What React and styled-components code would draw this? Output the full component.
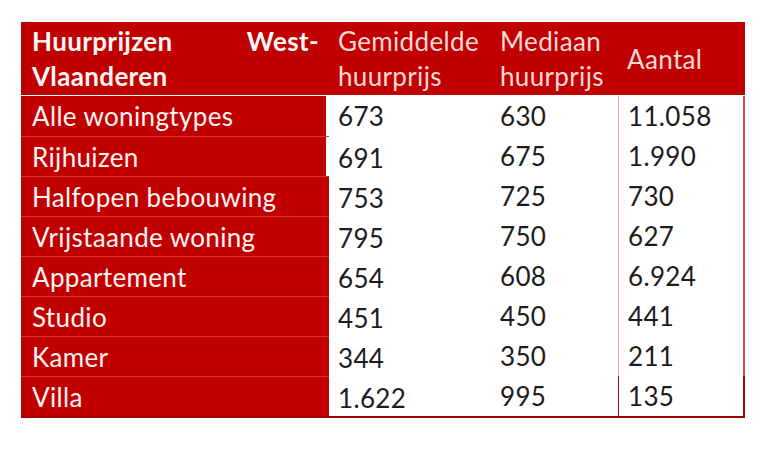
import React from "react";
import styled, { createGlobalStyle } from "styled-components";

const Global = createGlobalStyle`
  html, body { margin: 0; padding: 0; background: #ffffff; }
  body { font-family: Lato, "Open Sans", sans-serif; }
`;

const Page = styled.div`
  padding: 22px 0 0 21px;
  width: 767px;
  height: 452px;
  box-sizing: border-box;
`;

const Table = styled.div`
  display: grid;
  grid-template-columns: 308px 162px 127px 127px;
  width: 724px;
  font-family: Lato, "Open Sans", sans-serif;
  font-size: 26px;
  letter-spacing: 0.35px;
`;

const HeadCell = styled.div`
  background: #c00000;
  height: 74px;
  box-sizing: border-box;
  padding: ${(p) => (p.$first ? "2px 10px 0 11px" : "2px 0 0 9px")};
  line-height: 35px;
  color: ${(p) => (p.$first ? "#fff6f6" : "#fbd9d6")};
  font-weight: ${(p) => (p.$first ? 700 : 400)};
  display: ${(p) => (p.$center ? "flex" : "block")};
  align-items: center;
  border-bottom: 1px solid #ffffff;
  white-space: nowrap;
`;

const JustifiedLine = styled.div`
  display: flex;
  justify-content: space-between;
`;

const NameCell = styled.div`
  background: #c00000;
  height: 40px;
  box-sizing: border-box;
  padding: 1px 0 0 11px;
  line-height: 38px;
  color: #fff3f3;
  white-space: nowrap;
  border-top: ${(p) => (p.$first ? "none" : "1px solid #d53535")};
  box-shadow: ${(p) => (p.$narrow ? "inset -3px 0 0 #ffffff" : "none")};
  ${(p) => p.$last && "height: 42px; border-bottom: 2px solid #a00000;"}
`;

const ValueCell = styled.div`
  background: #ffffff;
  height: 40px;
  box-sizing: border-box;
  padding: ${(p) => (p.$shift ? "3px" : "1px")} 0 0 9px;
  line-height: 38px;
  color: #1c1c1c;
  border-left: ${(p) => (p.$sep ? `1px solid ${p.$last ? "#8a1010" : "#e3a6a6"}` : "none")};
  border-right: ${(p) => (p.$end ? `2px solid ${p.$last ? "#9a0a0a" : "#c85050"}` : "none")};
  ${(p) => p.$last && "height: 42px; border-bottom: 2px solid #a00000;"}
`;

const rows = [
  ["Alle woningtypes", "673", "630", "11.058"],
  ["Rijhuizen", "691", "675", "1.990"],
  ["Halfopen bebouwing", "753", "725", "730"],
  ["Vrijstaande woning", "795", "750", "627"],
  ["Appartement", "654", "608", "6.924"],
  ["Studio", "451", "450", "441"],
  ["Kamer", "344", "350", "211"],
  ["Villa", "1.622", "995", "135"],
];

export default function App() {
  return (
    <>
      <Global />
      <Page>
        <Table>
          <HeadCell $first>
            <JustifiedLine>
              <span>Huurprijzen</span>
              <span>West-</span>
            </JustifiedLine>
            <div>Vlaanderen</div>
          </HeadCell>
          <HeadCell>
            Gemiddelde
            <br />
            huurprijs
          </HeadCell>
          <HeadCell>
            Mediaan
            <br />
            huurprijs
          </HeadCell>
          <HeadCell $center>Aantal</HeadCell>
          {rows.map((r, i) => {
            const last = i === rows.length - 1;
            return (
              <React.Fragment key={r[0]}>
                <NameCell $first={i === 0} $narrow={i < 2} $last={last}>
                  {r[0]}
                </NameCell>
                <ValueCell $shift={i > 0} $last={last}>
                  {r[1]}
                </ValueCell>
                <ValueCell $last={last}>{r[2]}</ValueCell>
                <ValueCell $sep $end $last={last}>
                  {r[3]}
                </ValueCell>
              </React.Fragment>
            );
          })}
        </Table>
      </Page>
    </>
  );
}
